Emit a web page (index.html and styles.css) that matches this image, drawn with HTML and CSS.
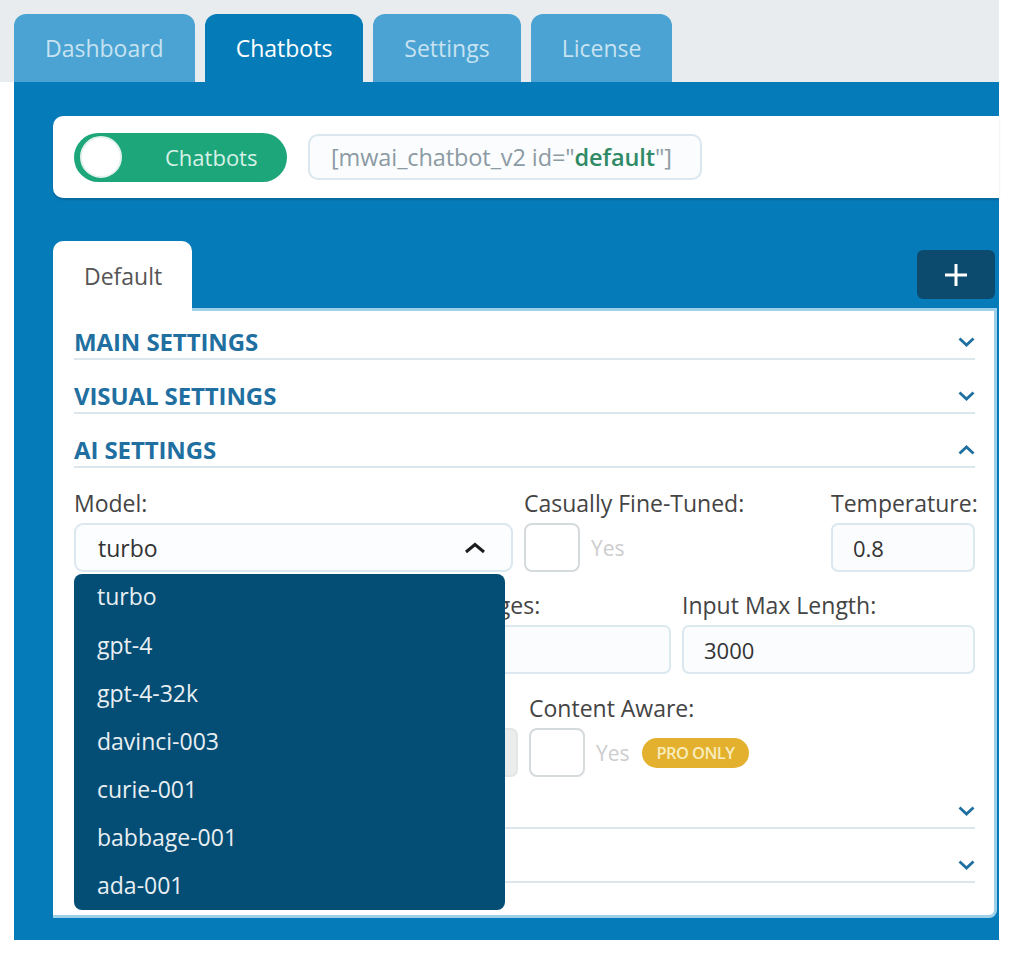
FILE: index.html
```html
<!DOCTYPE html>
<html lang="en">
<head>
<meta charset="utf-8">
<title>AI Engine – Chatbots</title>
<link rel="stylesheet" href="styles.css">
</head>
<body>
<div class="page">
  <nav class="top-tabs">
    <div class="top-tab">Dashboard</div>
    <div class="top-tab active">Chatbots</div>
    <div class="top-tab">Settings</div>
    <div class="top-tab">License</div>
  </nav>

  <main class="main">
    <div class="shortcode-card">
      <div class="toggle"><span class="knob"></span><span class="toggle-label">Chatbots</span></div>
      <div class="shortcode">[mwai_chatbot_v2 id="<b>default</b>"]</div>
    </div>

    <div class="bot-tabs">
      <div class="bot-tab">Default</div>
      <button class="add-btn" type="button" aria-label="Add">
        <svg width="24" height="24" viewBox="0 0 24 24"><path d="M12 1v22M1 12h22" stroke="#fff" stroke-width="3" fill="none"/></svg>
      </button>
    </div>

    <div class="panel">
      <div class="section-head first">
        <span>MAIN SETTINGS</span>
        <svg class="chev" width="17" height="10" viewBox="0 0 17 10"><path d="M1.5 1.5l7 6.5 7-6.5" fill="none" stroke="#1f6fa1" stroke-width="2.8"/></svg>
      </div>
      <div class="section-head">
        <span>VISUAL SETTINGS</span>
        <svg class="chev" width="17" height="10" viewBox="0 0 17 10"><path d="M1.5 1.5l7 6.5 7-6.5" fill="none" stroke="#1f6fa1" stroke-width="2.8"/></svg>
      </div>
      <div class="section-head">
        <span>AI SETTINGS</span>
        <svg class="chev" width="17" height="10" viewBox="0 0 17 10"><path d="M1.5 8.5l7-6.5 7 6.5" fill="none" stroke="#1f6fa1" stroke-width="2.8"/></svg>
      </div>

      <div class="ai-body">
        <div class="row row-1">
          <div class="field model-field">
            <label class="lbl">Model:</label>
            <div class="select">
              <span>turbo</span>
              <svg width="22" height="12" viewBox="0 0 22 12"><path d="M2 10l9-7.5 9 7.5" fill="none" stroke="#1d1d1d" stroke-width="3"/></svg>
            </div>
            <ul class="dropdown">
              <li>turbo</li>
              <li>gpt-4</li>
              <li>gpt-4-32k</li>
              <li>davinci-003</li>
              <li>curie-001</li>
              <li>babbage-001</li>
              <li>ada-001</li>
            </ul>
          </div>
          <div class="field">
            <label class="lbl">Casually Fine-Tuned:</label>
            <div class="check-line"><span class="checkbox"></span><span class="yes">Yes</span></div>
          </div>
          <div class="field">
            <label class="lbl">Temperature:</label>
            <div class="input">0.8</div>
          </div>
        </div>

        <div class="row row-2">
          <div class="field">
            <span class="lbl">&nbsp;</span>
            <div class="input"></div>
          </div>
          <div class="field">
            <label class="lbl">Max Messages:</label>
            <div class="input"></div>
          </div>
          <div class="field">
            <label class="lbl">Input Max Length:</label>
            <div class="input">3000</div>
          </div>
        </div>

        <div class="row row-3">
          <div class="field">
            <span class="lbl">&nbsp;</span>
            <div class="input disabled"></div>
          </div>
          <div class="field">
            <label class="lbl">Content Aware:</label>
            <div class="check-line"><span class="checkbox"></span><span class="yes">Yes</span><span class="pro">PRO ONLY</span></div>
          </div>
        </div>
      </div>

      <div class="section-head">
        <span></span>
        <svg class="chev" width="17" height="10" viewBox="0 0 17 10"><path d="M1.5 1.5l7 6.5 7-6.5" fill="none" stroke="#1f6fa1" stroke-width="2.8"/></svg>
      </div>
      <div class="section-head">
        <span></span>
        <svg class="chev" width="17" height="10" viewBox="0 0 17 10"><path d="M1.5 1.5l7 6.5 7-6.5" fill="none" stroke="#1f6fa1" stroke-width="2.8"/></svg>
      </div>
    </div>
  </main>
</div>
</body>
</html>
```

FILE: styles.css
```css
* { box-sizing: border-box; }

body {
  margin: 0;
  background: #ffffff;
  font-family: "Open Sans", "Noto Sans", sans-serif;
  color: #444;
}

.page { width: 999px; }

/* top navigation tabs */
.top-tabs {
  display: flex;
  gap: 10px;
  height: 82px;
  padding: 14px 0 0 14px;
  background: #e8ecef;
}
.top-tab {
  height: 68px;
  padding: 0 31px;
  display: flex;
  align-items: center;
  background: #4aa3d2;
  color: #c7e2f1;
  font-size: 23px;
  border-radius: 12px 12px 0 0;
}
.top-tab.active {
  background: #057bb8;
  color: #ffffff;
}

/* blue work area */
.main {
  margin-left: 14px;
  background: #067bb9;
  padding: 34px 0 22px 39px;
}

.shortcode-card {
  display: flex;
  align-items: center;
  gap: 21px;
  height: 82px;
  padding: 0 21px;
  background: #ffffff;
  border-radius: 10px 0 0 10px;
  box-shadow: 0 2px 2px rgba(0, 0, 0, 0.15);
}
.toggle {
  display: flex;
  align-items: center;
  width: 213px;
  height: 49px;
  border-radius: 25px;
  background: #1ea67b;
}
.knob {
  width: 42px;
  height: 42px;
  margin-left: 6px;
  border-radius: 50%;
  background: #fff;
  border: 2px solid #e3f2ec;
}
.toggle-label {
  margin-left: 43px;
  font-size: 22px;
  color: #d6f1e6;
}
.shortcode {
  display: flex;
  align-items: center;
  width: 394px;
  height: 46px;
  padding: 0 21px;
  border: 2px solid #dbe7ee;
  border-radius: 10px;
  background: #fafcfd;
  color: #8c9aa3;
  font-size: 23.5px;
  letter-spacing: -0.1px;
  white-space: nowrap;
}
.shortcode b { color: #2f8a65; font-weight: 600; }

/* chatbot tabs */
.bot-tabs {
  display: flex;
  justify-content: space-between;
  align-items: center;
  margin-top: 43px;
  margin-right: 4px;
}
.bot-tab {
  position: relative;
  z-index: 1;
  width: 139px;
  height: 70px;
  margin-bottom: -3px;
  padding-left: 31px;
  display: flex;
  align-items: center;
  background: #ffffff;
  border-radius: 10px 10px 0 0;
  color: #555;
  font-size: 23px;
}
.add-btn {
  width: 78px;
  height: 49px;
  border: 0;
  border-radius: 6px;
  background: #0c4a6e;
  display: flex;
  align-items: center;
  justify-content: center;
  padding: 0;
}

/* panel */
.panel {
  margin-right: 2px;
  background: #ffffff;
  border-top: 3px solid #9fd0ea;
  border-right: 3px solid #9fd0ea;
  border-bottom: 3px solid #9fd0ea;
  border-radius: 0 0 8px 0;
  padding: 0 19px 32px 21px;
}
.section-head {
  display: flex;
  justify-content: space-between;
  align-items: center;
  padding: 23px 0 3px;
  height: 54px;
  line-height: 26px;
  border-bottom: 2px solid #dce6ed;
  color: #1f6fa1;
  font-weight: 700;
  font-size: 24px;
  letter-spacing: -0.1px;
}
.section-head.first { padding-top: 18px; height: 49px; }

/* AI settings */
.ai-body { padding-top: 1px; }
.row {
  display: grid;
  column-gap: 11px;
  margin-top: 22px;
}
.row-1 { grid-template-columns: 439px 1fr 144px; }
.row-2 { grid-template-columns: 1fr 1fr 1fr; margin-top: 21px; }
.row-3 { grid-template-columns: 444px 1fr; column-gap: 11px; margin-bottom: -2px; }

.field { position: relative; display: flex; flex-direction: column; }
.lbl {
  display: block;
  line-height: 24px;
  margin-bottom: 8px;
  font-size: 23px;
  color: #444;
  white-space: nowrap;
}
.select {
  display: flex;
  justify-content: space-between;
  align-items: center;
  height: 49px;
  padding: 0 25px 0 22px;
  border: 2px solid #dbe8ef;
  border-radius: 9px;
  background: #fbfdfe;
  font-size: 23px;
  color: #333;
}
.input {
  height: 49px;
  display: flex;
  align-items: center;
  padding: 0 20px;
  border: 2px solid #dbe8ef;
  border-radius: 7px;
  background: #fafcfd;
  font-size: 22px;
  color: #333;
}
.input.disabled {
  background: #ebecec;
  border-color: #e4e6e6;
}
.check-line {
  display: flex;
  align-items: center;
  height: 49px;
}
.checkbox {
  width: 56px;
  height: 49px;
  border: 2px solid #d5dadd;
  border-radius: 8px;
  background: #fff;
}
.yes {
  margin-left: 11px;
  font-size: 21px;
  color: #cdcdcd;
}
.pro {
  margin-left: 12px;
  height: 30px;
  padding: 0 15px;
  display: flex;
  align-items: center;
  border-radius: 16px;
  background: #e3b12e;
  color: #f8ecbd;
  font-size: 16.5px;
  font-weight: 600;
  letter-spacing: -0.6px;
}

/* dropdown menu over the form */
.dropdown {
  position: absolute;
  z-index: 5;
  top: calc(100% + 2px);
  left: 0;
  width: 431px;
  margin: 0;
  padding: 0;
  list-style: none;
  background: #044d74;
  border-radius: 8px;
  overflow: hidden;
}
.dropdown li {
  height: 48px;
  line-height: 46px;
  padding-left: 23px;
  font-size: 23px;
  color: #e8eff3;
}
.dropdown li:first-child { line-height: 44px; }
```
